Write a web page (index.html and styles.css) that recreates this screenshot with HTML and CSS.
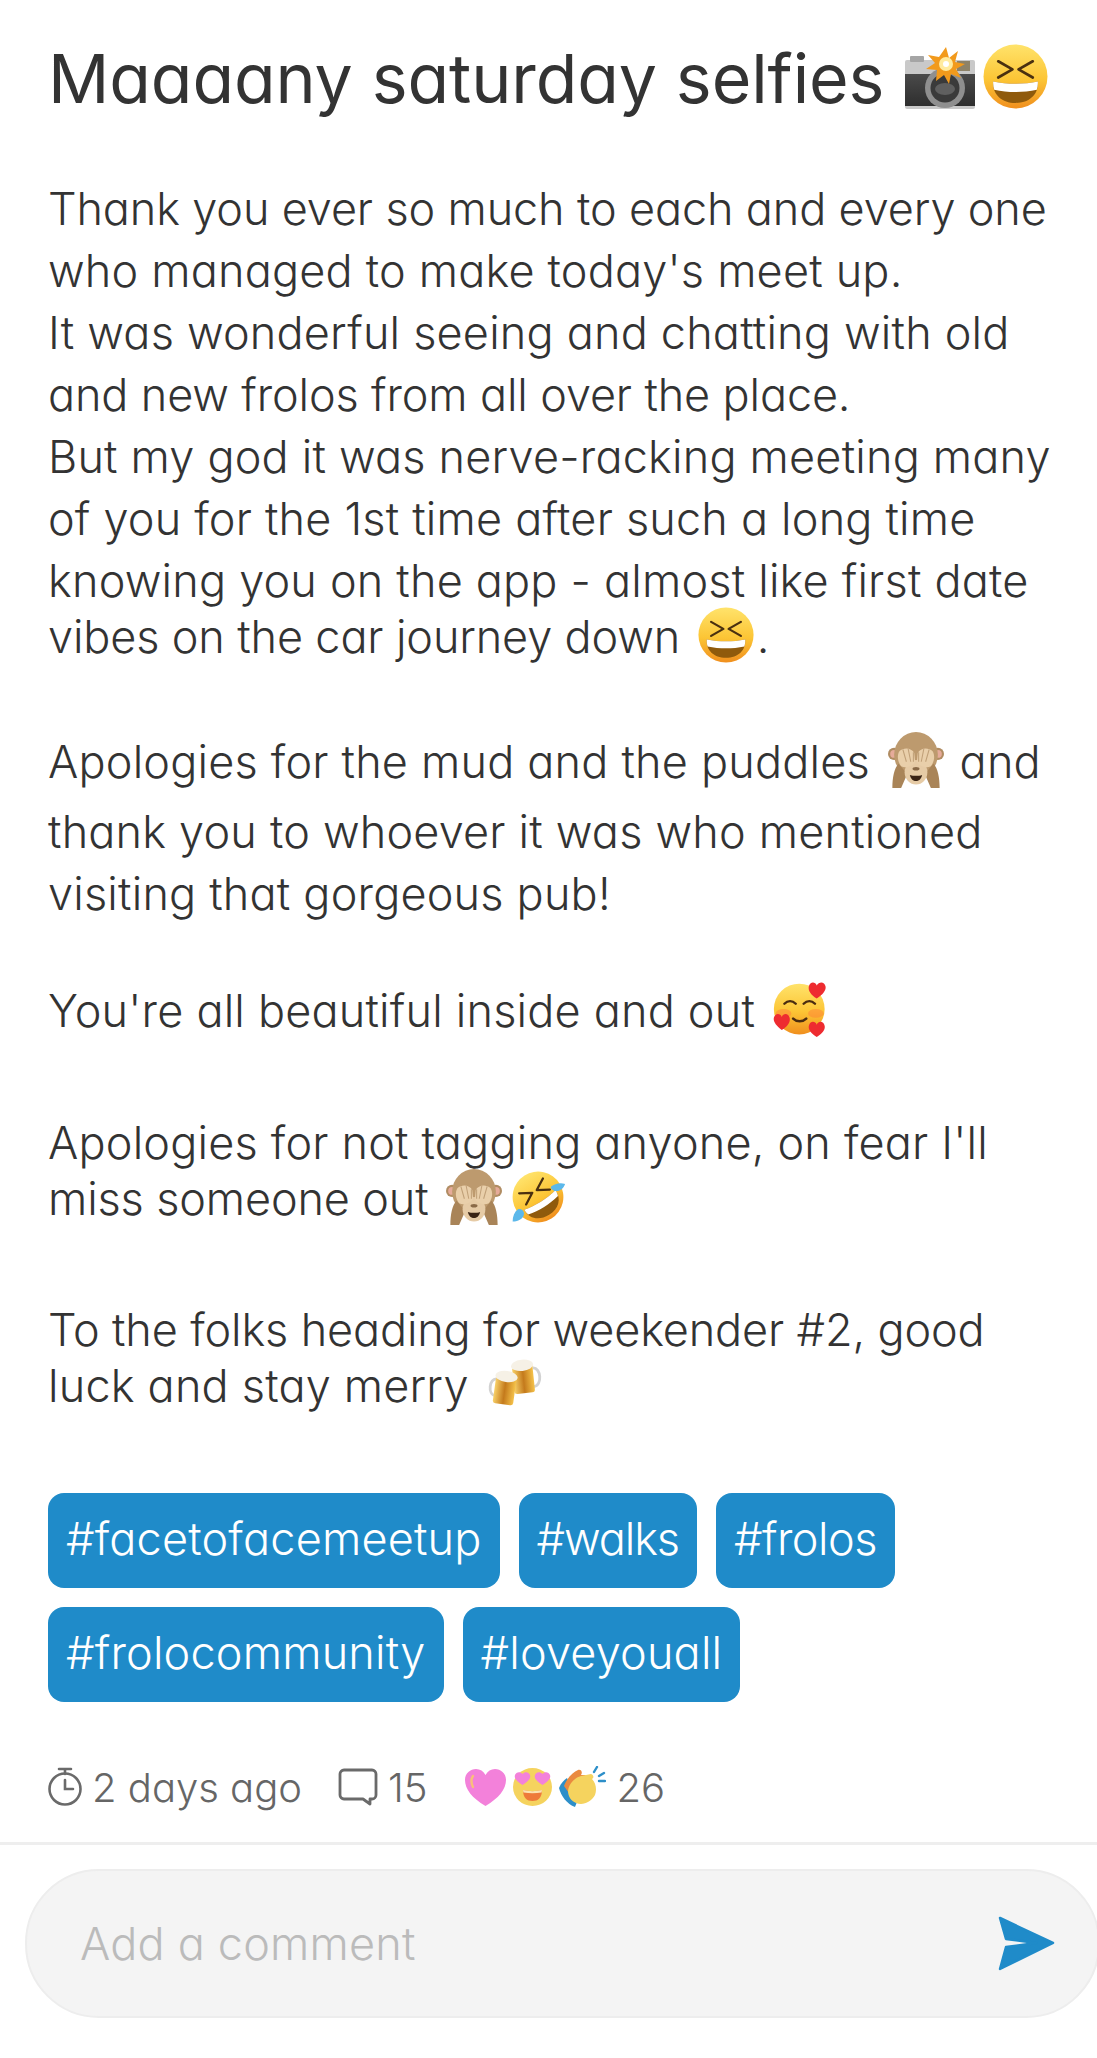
FILE: index.html
```html
<!DOCTYPE html>
<html lang="en">
<head>
<meta charset="utf-8">
<title>Maaaany saturday selfies</title>
<link rel="stylesheet" href="styles.css">
</head>
<body>
<svg class="defs" aria-hidden="true">
  <defs>
    <linearGradient id="gFace" x1="0" y1="0" x2="0" y2="1">
      <stop offset="0" stop-color="#ffe36b"/><stop offset=".55" stop-color="#fcc535"/><stop offset="1" stop-color="#f08f1e"/>
    </linearGradient>
    <linearGradient id="gBeer" x1="0" y1="0" x2="1" y2="0">
      <stop offset="0" stop-color="#f8d169"/><stop offset=".5" stop-color="#c47a1c"/><stop offset="1" stop-color="#f5c24a"/>
    </linearGradient>
    <linearGradient id="gCam" x1="0" y1="0" x2="0" y2="1">
      <stop offset="0" stop-color="#4a4a4a"/><stop offset="1" stop-color="#2e2e2e"/>
    </linearGradient>
    <symbol id="e-grin" viewBox="0 0 64 64">
      <circle cx="32" cy="32" r="31.500" fill="url(#gFace)"/>
      <path d="M15 17l14 8-14 8M49 17l-14 8 14 8" fill="none" stroke="#4a3010" stroke-width="2.600" stroke-linecap="round" stroke-linejoin="round"/>
      <path d="M10 37c14 3 30 3 44 0 1 12-8 21-22 21S9 49 10 37z" fill="#8f5a0c"/>
      <path d="M10 37c14 3 30 3 44 0 .2 3-.2 5.500-1 8-14 3-28 3-42 0-.8-2.500-1.200-5-1-8z" fill="#fff"/>
    </symbol>
    <symbol id="e-rofl" viewBox="0 0 64 64">
      <g transform="rotate(-32 32 32)">
        <circle cx="32" cy="32" r="29" fill="url(#gFace)"/>
        <path d="M16 17l13 7.500-13 7.500M48 17l-13 7.500 13 7.500" fill="none" stroke="#4a3010" stroke-width="2.600" stroke-linecap="round" stroke-linejoin="round"/>
        <path d="M11 36c13 3 29 3 42 0 1 12-8 20-21 20S10 48 11 36z" fill="#8f5a0c"/>
        <path d="M11 36c13 3 29 3 42 0 .2 3-.2 5-1 7-13 3-27 3-40 0-.8-2-1.200-4-1-7z" fill="#fff"/>
      </g>
      <path d="M47 20c4-3 10-5 16-3-2 6-7 9-12 8-3-1-5-3-4-5zM3 60c0-6 2-11 6-14 3-1 7 1 7 5 0 5-6 9-13 9z" fill="#5cb8ea"/>
    </symbol>
    <symbol id="e-camera" viewBox="0 0 70 62">
      <rect x="0" y="13" width="70" height="49" rx="2" fill="#c9c9c9"/>
      <rect x="0" y="27" width="70" height="32" fill="url(#gCam)"/>
      <rect x="5" y="9" width="14" height="6" rx="1" fill="#a5a5a5"/>
      <rect x="52" y="14" width="13" height="10" fill="#8d8268"/>
      <circle cx="40" cy="41" r="20" fill="#8f8f8f"/>
      <circle cx="40" cy="41" r="14.500" fill="#3a3a3a"/>
      <ellipse cx="40" cy="42" rx="10" ry="6" fill="#5f5f5f"/>
      <path d="M41 0l3 11 9-7-3 11 10 2-9 5 5 9-10-4-2 10-5-9-8 6 1-11-11-1 9-6-7-8 11 2z" fill="#f29a1c"/>
      <circle cx="41" cy="17" r="7" fill="#ffeb9e"/><circle cx="41" cy="17" r="3" fill="#fff"/>
    </symbol>
    <symbol id="e-monkey" viewBox="0 0 64 64">
      <circle cx="7" cy="25" r="7" fill="#b08c62"/><circle cx="7" cy="25" r="4.500" fill="#e6ab9a"/>
      <circle cx="57" cy="25" r="7" fill="#b08c62"/><circle cx="57" cy="25" r="4.500" fill="#e6ab9a"/>
      <ellipse cx="32" cy="26" rx="25" ry="26" fill="#bd9a6e"/>
      <path d="M5 64c0-12 2-22 7-28l10 12-7 16zM59 64c0-12-2-22-7-28L42 48l7 16z" fill="#a98458"/>
      <ellipse cx="32" cy="46" rx="13" ry="14" fill="#e6cba6"/>
      <path d="M13 22c5-5 14-4 17 2l1 10c-2 5-11 8-16 5-4-5-5-12-2-17zM51 22c-5-5-14-4-17 2l-1 10c2 5 11 8 16 5 4-5 5-12 2-17z" fill="#e9cfaa"/>
      <path d="M17 20l4 14M23 19l3 15M29 23l0 11M47 20l-4 14M41 19l-3 15M35 23l0 11" stroke="#c0a078" stroke-width="1.200"/>
      <ellipse cx="32" cy="42" rx="4" ry="2" fill="#8a6a48"/>
      <path d="M25 49c4 1.500 10 1.500 14 0-1 5-4 7-7 7s-6-2-7-7z" fill="#3a2415"/>
    </symbol>
    <symbol id="e-love" viewBox="0 0 64 64">
      <circle cx="30" cy="32" r="29" fill="url(#gFace)"/>
      <path d="M13 26c4-4 9-4 13 0M35 26c4-4 9-4 13 0" fill="none" stroke="#4a2c10" stroke-width="2.800" stroke-linecap="round"/>
      <path d="M23 43c4 4 11 4 15 0" fill="none" stroke="#4a2c10" stroke-width="3" stroke-linecap="round"/>
      <ellipse cx="12" cy="37" rx="9" ry="5" fill="#ff7a3a" opacity=".45"/><ellipse cx="49" cy="37" rx="9" ry="5" fill="#ff7a3a" opacity=".45"/>
      <path d="M50 20C42 15 40 10 41 6c1-5 7-6 9-1 3-5 9-4 10 1 1 4-2 9-10 14zM10 56C3 51 0 46 1 42c1-5 7-6 9-1 2-5 8-4 9 1 1 4-1 9-9 14zM50 64c-7-4-10-9-9-13 1-5 7-6 9-1 2-5 8-4 9 1 1 4-2 9-9 13z" fill="#ee2b30"/>
    </symbol>
    <symbol id="e-beers" viewBox="0 0 60 52">
      <g transform="rotate(-6 38 20)">
        <path d="M50 10c9 0 9 20-1 20" fill="none" stroke="#d2d2d2" stroke-width="3"/>
        <rect x="28" y="4" width="22" height="32" rx="3" fill="url(#gBeer)"/>
        <ellipse cx="39" cy="6" rx="12" ry="6" fill="#f6f1e6"/>
      </g>
      <g transform="rotate(8 20 32)">
        <path d="M9 22c-8 0-8 18 1 18" fill="none" stroke="#d2d2d2" stroke-width="3"/>
        <rect x="8" y="16" width="22" height="32" rx="3" fill="url(#gBeer)"/>
        <ellipse cx="19" cy="18" rx="12" ry="6" fill="#f6f1e6"/>
      </g>
    </symbol>
    <symbol id="e-heart" viewBox="0 0 41 37">
      <path d="M20.500 37C7 29 0 20 0 11 0 4 5.500 0 11 0c4 0 7.500 2 9.500 6 2-4 5.500-6 9.500-6 5.500 0 11 4 11 11 0 9-7 18-20.500 26z" fill="#f381da"/>
      <path d="M8 7c-2 3-2 7 0 11" fill="none" stroke="#f9c07a" stroke-width="2.400" stroke-linecap="round"/>
    </symbol>
    <symbol id="e-hearteyes" viewBox="0 0 39 38">
      <ellipse cx="19.500" cy="19" rx="19.500" ry="19" fill="#f5d35e"/>
      <path d="M9.500 17C3 13 1 10 2 7c1-3 5-4 7.500-1C12 3 16 4 17 7c1 3-1 6-7.500 10zM29.500 17C23 13 21 10 22 7c1-3 5-4 7.500-1C32 3 36 4 37 7c1 3-1 6-7.500 10z" fill="#f381da"/>
      <path d="M10 22c6 1.500 13 1.500 19 0 0 8-4 11-9.500 11S10 30 10 22z" fill="#ee7a3a"/>
      <path d="M10 22c6 1.500 13 1.500 19 0l-.4 2.500c-6 1-12 1-18.200 0z" fill="#fbe3b0"/>
    </symbol>
    <symbol id="e-clap" viewBox="0 0 47 42">
      <path d="M0 22C2 17 5 14 8 12l10 24-2 5C8 38 2 30 0 22z" fill="#2d8fc9"/>
      <path d="M5 20C8 12 14 6 19 4c3-1 5 2 3 5h5L12 30z" fill="#ea8a3f"/>
      <path d="M9 25c1-7 6-13 13-15l10-2c3 1 3 4 1 5 4 4 5 11 3 16-4 7-12 11-19 8-5-2-8-7-8-12z" fill="#f5d35e"/>
      <path d="M35 6l3-5M40 10l5-3M40 15h6" stroke="#2d8fc9" stroke-width="2.400" stroke-linecap="round"/>
    </symbol>
  </defs>
</svg>

<main class="post">
  <h1 class="title">Maaaany saturday selfies <svg class="em-camera"><use href="#e-camera"/></svg><svg class="em-title"><use href="#e-grin"/></svg></h1>

  <div class="body">
    <p class="para p1">
      <span class="line snug">Thank you ever so much to each and every one</span>
      <span class="line">who managed to make today's meet up.</span>
      <span class="line">It was wonderful seeing and chatting with old</span>
      <span class="line snug">and new frolos from all over the place.</span>
      <span class="line">But my god it was nerve-racking meeting many</span>
      <span class="line">of you for the 1st time after such a long time</span>
      <span class="line">knowing you on the app - almost like first date</span>
      <span class="line tight snug">vibes on the car journey down <svg class="em"><use href="#e-grin"/></svg>.</span>
    </p>
    <p class="para p2">
      <span class="line">Apologies for the mud and the puddles <svg class="em"><use href="#e-monkey"/></svg> and</span>
      <span class="line loose">thank you to whoever it was who mentioned</span>
      <span class="line">visiting that gorgeous pub!</span>
    </p>
    <p class="para p3">
      <span class="line">You're all beautiful inside and out <svg class="em"><use href="#e-love"/></svg></span>
    </p>
    <p class="para p4">
      <span class="line">Apologies for not tagging anyone, on fear I'll</span>
      <span class="line tight snug">miss someone out <svg class="em"><use href="#e-monkey"/></svg><svg class="em"><use href="#e-rofl"/></svg></span>
    </p>
    <p class="para p5">
      <span class="line snug">To the folks heading for weekender #2, good</span>
      <span class="line tight">luck and stay merry <svg class="em"><use href="#e-beers"/></svg></span>
    </p>
  </div>

  <ul class="tags">
    <li class="tag">#facetofacemeetup</li>
    <li class="tag tag-walks">#walks</li>
    <li class="tag tag-frolos">#frolos</li>
    <li class="tag">#frolocommunity</li>
    <li class="tag">#loveyouall</li>
  </ul>

  <div class="meta">
    <span class="meta-item">
      <svg class="ic-clock" viewBox="0 0 34 40" fill="none" stroke="#6a6a6a" stroke-width="2.600" stroke-linecap="round"><path d="M11 2h12M17 2v5"/><circle cx="17" cy="22" r="15.500"/><path d="M17 13v9h8"/></svg>
      2 days ago
    </span>
    <span class="meta-item">
      <svg class="ic-comment" viewBox="0 0 40 38" fill="none" stroke="#6a6a6a" stroke-width="2.800" stroke-linejoin="round"><path d="M6 2h28a4 4 0 0 1 4 4v21a4 4 0 0 1-4 4h-2v5l-7-5H6a4 4 0 0 1-4-4V6a4 4 0 0 1 4-4z"/></svg>
      15
    </span>
    <span class="meta-item meta-reactions">
      <span class="reactions"><svg class="rx-heart"><use href="#e-heart"/></svg><svg class="rx-eyes"><use href="#e-hearteyes"/></svg><svg class="rx-clap"><use href="#e-clap"/></svg></span>
      26
    </span>
  </div>
</main>

<footer class="composer">
  <div class="field">
    <span class="placeholder">Add a comment</span>
    <svg class="ic-send" viewBox="0 0 57 55"><path d="M2 2 55 27 2 53 8 31 38 27 8 23z" fill="#1f8bc9" stroke="#1f8bc9" stroke-width="2.500" stroke-linejoin="round"/></svg>
  </div>
</footer>
</body>
</html>
```
FILE: styles.css
```css
* { box-sizing: border-box; }
html, body { margin: 0; padding: 0; background: #fff; }
body {
  font-family: Inter, "Noto Sans", sans-serif;
  font-feature-settings: "cv11" 1;
  color: #333;
  width: 1097px;
  height: 2058px;
  overflow: hidden;
}
.defs { display: block; width: 0; height: 0; }
.post { padding: 0 0 0 48px; }
.title {
  margin: 0;
  padding-top: 38px;
  height: 122px;
  font-size: 68px;
  line-height: 80px;
  font-weight: 400;
  color: #333;
  letter-spacing: -0.1px;
  white-space: nowrap;
}
.em-camera { width: 70px; height: 62px; vertical-align: -6px; margin-left: 2px; }
.em-title { width: 65px; height: 65px; vertical-align: -6px; margin-left: 8px; }
.body { padding-top: 56px; font-size: 45px; font-weight: 300; }
.para { margin: 0; }
.line { display: block; height: 62px; line-height: 62px; white-space: nowrap; letter-spacing: 0.2px; }
.snug { letter-spacing: -0.13px; }
.tight { margin-top: -6px; }
.loose { margin-top: 8px; }
.p2 { margin-top: 63px; }
.p3 { margin-top: 55px; }
.p4 { margin-top: 70px; }
.p5 { margin-top: 69px; }
.em { width: 56px; height: 56px; vertical-align: -10px; margin: 0 3px 0 5px; }
.tags {
  list-style: none;
  display: flex;
  flex-wrap: wrap;
  gap: 19px;
  margin: 76px 0 0;
  padding: 0;
  width: 900px;
}
.tag {
  background: #1f8bc9;
  color: #fff;
  height: 95px;
  line-height: 92px;
  border-radius: 16px;
  padding: 0 18px;
  font-size: 45px;
  font-weight: 300;
  letter-spacing: 0.2px;
}
.tag-walks { letter-spacing: -1.1px; }
.tag-frolos { letter-spacing: -0.5px; }
.meta {
  display: flex;
  align-items: center;
  gap: 36px;
  margin-top: 60px;
  color: #666;
  font-size: 40px;
  font-weight: 300;
  height: 50px;
}
.meta-item { display: flex; align-items: center; gap: 10px; }
.meta-reactions { margin-left: 2px; }
.ic-clock { width: 34px; height: 40px; }
.ic-comment { width: 40px; height: 38px; }
.reactions { display: flex; align-items: center; gap: 7px; }
.rx-heart { width: 41px; height: 37px; }
.rx-eyes { width: 39px; height: 38px; }
.rx-clap { width: 47px; height: 42px; }
.composer {
  margin-top: 30px;
  border-top: 3px solid #eee;
  padding: 24px 0 0 25px;
}
.field {
  display: flex;
  align-items: center;
  justify-content: space-between;
  height: 149px;
  width: 1075px;
  padding: 0 43px 0 53px;
  background: #f4f4f4;
  border: 2px solid #ededed;
  border-radius: 74px;
}
.placeholder { color: #bbb; font-size: 45px; font-weight: 300; letter-spacing: 0.2px; }
.ic-send { width: 57px; height: 55px; }
```
